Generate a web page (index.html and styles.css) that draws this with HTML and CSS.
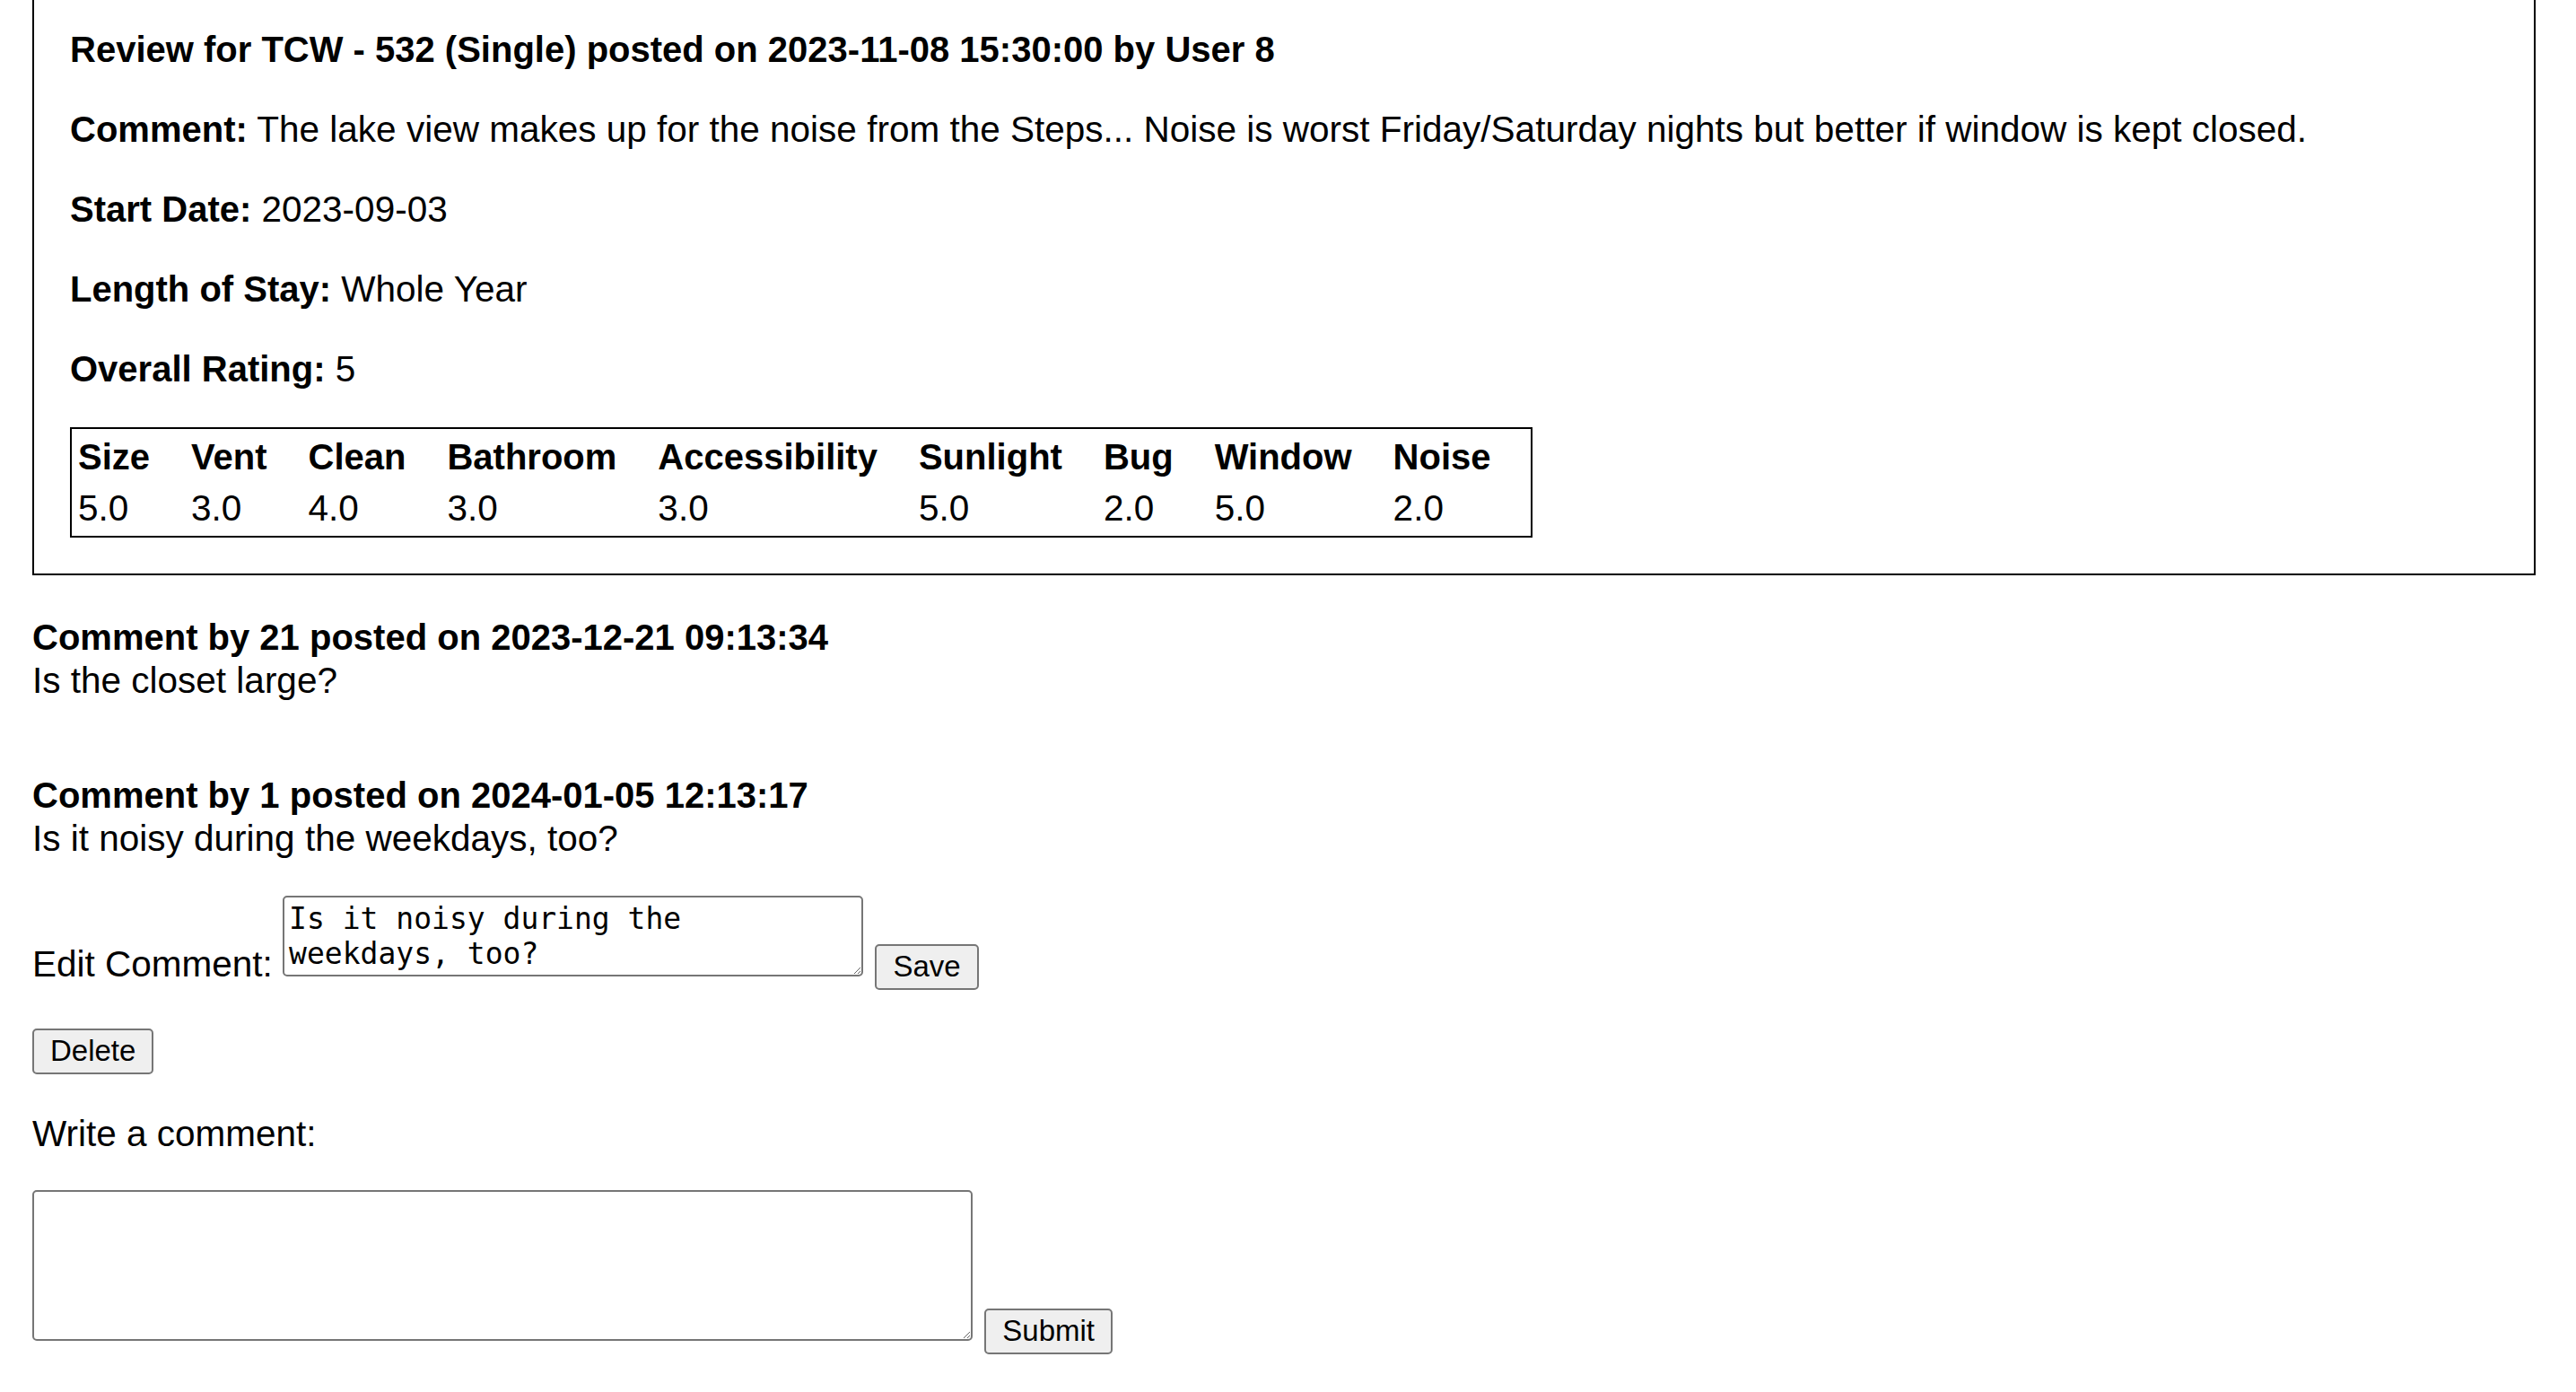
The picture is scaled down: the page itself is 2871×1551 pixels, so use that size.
FILE: index.html
```html
<!DOCTYPE html>
<html lang="en">
<head>
<meta charset="utf-8">
<title>Review</title>
<link rel="stylesheet" href="styles.css">
</head>
<body>
<div class="page">
  <div class="review">
    <p class="title"><strong>Review for TCW - 532 (Single) posted on 2023-11-08 15:30:00 by User 8</strong></p>
    <p><strong>Comment:</strong> The lake view makes up for the noise from the Steps... Noise is worst Friday/Saturday nights but better if window is kept closed.</p>
    <p><strong>Start Date:</strong> 2023-09-03</p>
    <p><strong>Length of Stay:</strong> Whole Year</p>
    <p><strong>Overall Rating:</strong> 5</p>
    <table class="ratings">
      <tr><th>Size</th><th>Vent</th><th>Clean</th><th>Bathroom</th><th>Accessibility</th><th>Sunlight</th><th>Bug</th><th>Window</th><th>Noise</th></tr>
      <tr><td>5.0</td><td>3.0</td><td>4.0</td><td>3.0</td><td>3.0</td><td>5.0</td><td>2.0</td><td>5.0</td><td>2.0</td></tr>
    </table>
  </div>

  <div class="comment first">
    <strong>Comment by 21 posted on 2023-12-21 09:13:34</strong><br>
    Is the closet large?
  </div>

  <div class="comment second">
    <strong>Comment by 1 posted on 2024-01-05 12:13:17</strong><br>
    Is it noisy during the weekdays, too?
  </div>

  <form class="edit-form">
    <label class="edit-label">Edit Comment:</label> <textarea class="edit-area">Is it noisy during the weekdays, too?</textarea> <button type="button" class="btn">Save</button>
  </form>

  <form class="delete-form">
    <button type="button" class="btn">Delete</button>
  </form>

  <p class="write-label">Write a comment:</p>

  <form class="new-form">
    <textarea class="new-area"></textarea> <button type="button" class="btn">Submit</button>
  </form>
</div>
</body>
</html>
```

FILE: styles.css
```css
html, body {
  margin: 0;
  padding: 0;
  background: #ffffff;
}

body {
  font-family: "Liberation Sans", Arial, Helvetica, sans-serif;
  font-size: 40.5px;
  line-height: 48px;
  color: #000000;
  overflow: hidden;
}

strong,
th {
  font-size: 40px;
}

.page {
  padding: 0 45px 0 36px;
}

.review {
  margin-top: -51px;
  border: 2px solid #000000;
  padding: 40px;
}

.review p {
  margin: 41px 0;
}

.review .title {
  margin-top: 40px;
}

.ratings {
  border: 2px solid #000000;
  border-spacing: 5px;
  line-height: 46px;
  margin: 0;
}

.ratings th,
.ratings td {
  text-align: left;
  padding: 3px 39px 3px 2px;
}

.ratings th {
  font-weight: bold;
}

.comment.first {
  margin-top: 45px;
}

.comment.second {
  margin-top: 80px;
}

.edit-form {
  margin: 40px 0 0 0;
}

.delete-form {
  margin: 41px 0 0 0;
}

.write-label {
  margin: 42px 0 0 0;
}

.new-form {
  margin: 39px 0 0 0;
}

textarea {
  box-sizing: border-box;
  font-family: "DejaVu Sans Mono", "Liberation Mono", monospace;
  font-size: 33px;
  line-height: 39px;
  color: #000000;
  border: 2px solid #767676;
  border-radius: 5px;
  padding: 4px 5px;
  margin: 0 2px 0 0;
  vertical-align: baseline;
  background: #ffffff;
}

.edit-area {
  width: 647px;
  height: 90px;
}

.new-area {
  width: 1048px;
  height: 168px;
}

.btn {
  font-family: "Liberation Sans", Arial, Helvetica, sans-serif;
  font-size: 33px;
  line-height: 39px;
  color: #000000;
  background: #efefef;
  border: 2px solid #767676;
  border-radius: 5px;
  padding: 3px 18px 5px 18px;
  margin: 0;
}
```
